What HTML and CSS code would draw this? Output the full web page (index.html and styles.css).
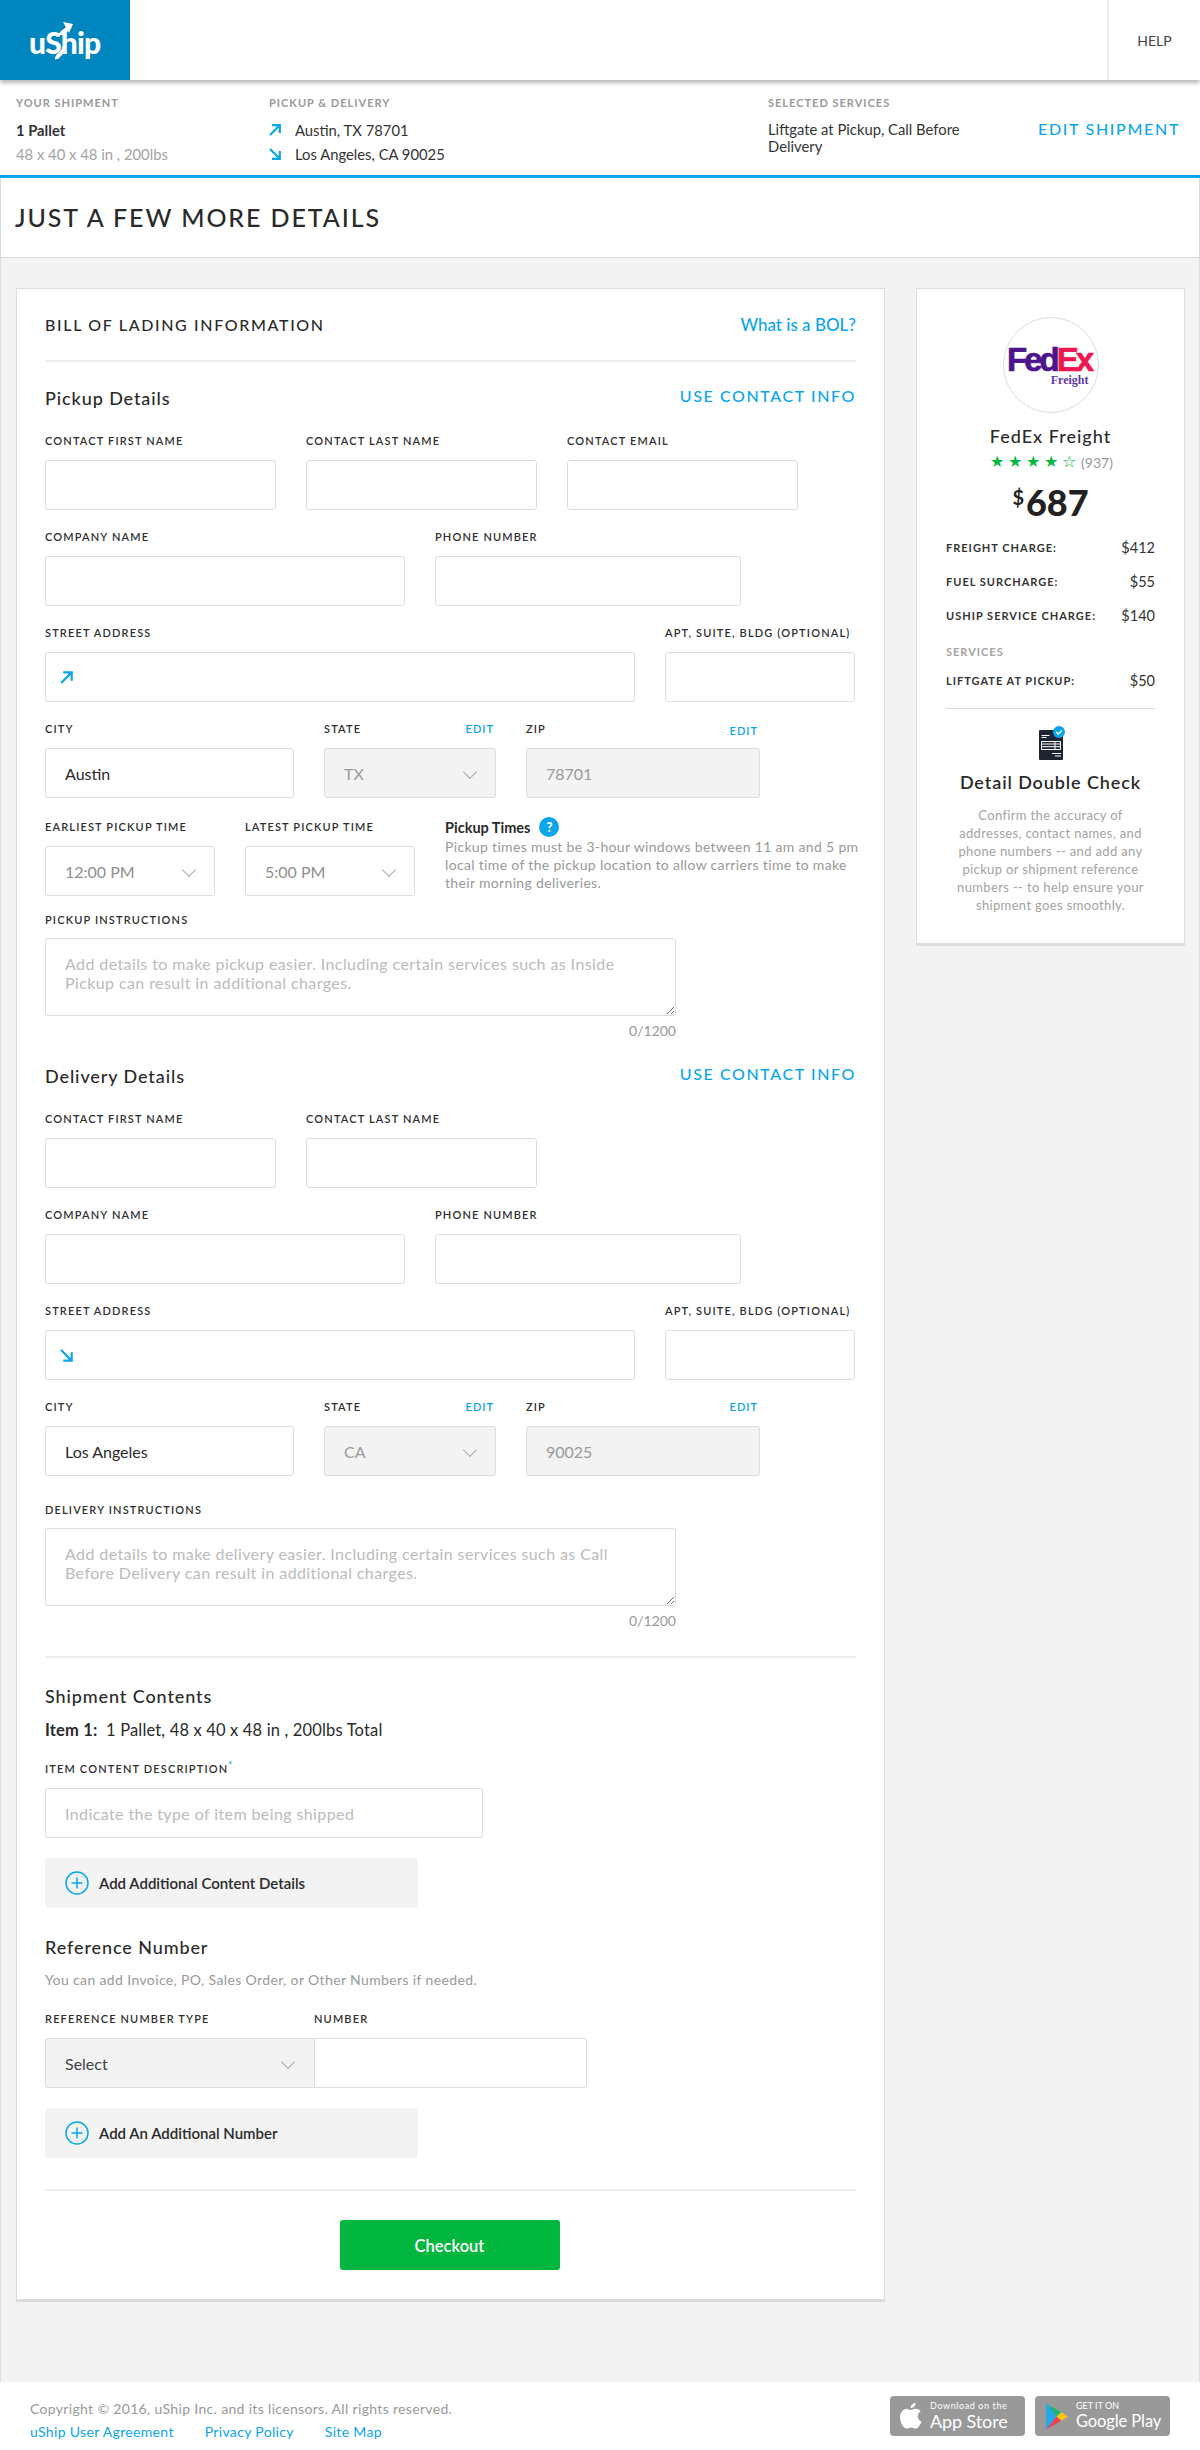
FILE: index.html
```html
<!DOCTYPE html>
<html lang="en">
<head>
<meta charset="utf-8">
<title>uShip - Just a few more details</title>
<link rel="stylesheet" href="styles.css">
</head>
<body>
<header class="topbar">
  <a class="logo" href="#">
    <span class="logo-text">uShip</span>
    <svg class="logo-swoosh" width="70" height="40" viewBox="0 0 70 40" aria-hidden="true">
      <path d="M27 37c-1-4 8-6 7-12M31 13c0-4 7-4 8-9" fill="none" stroke="#fff" stroke-width="4"/>
      <path d="M33 0l10 2-4 9z" fill="#fff"/>
    </svg>
  </a>
  <a class="help" href="#">HELP</a>
</header>

<section class="summary">
  <div class="sum-col sum-ship">
    <div class="sum-label">YOUR SHIPMENT</div>
    <div class="sum-line sum-strong">1 Pallet</div>
    <div class="sum-line sum-muted">48 x 40 x 48 in , 200lbs</div>
  </div>
  <div class="sum-col sum-route">
    <div class="sum-label">PICKUP &amp; DELIVERY</div>
    <div class="sum-line route-line">
      <svg class="arrow" width="12" height="12" viewBox="0 0 12 12"><path d="M1 11L10.500 1.500M3 1.200h7.800V9" fill="none" stroke="#0aa5ec" stroke-width="2.200"/></svg>
      Austin, TX 78701
    </div>
    <div class="sum-line route-line">
      <svg class="arrow" width="12" height="12" viewBox="0 0 12 12"><path d="M1 1l9.500 9.500M3 10.800h7.800V3" fill="none" stroke="#0aa5ec" stroke-width="2.200"/></svg>
      Los Angeles, CA 90025
    </div>
  </div>
  <div class="sum-col sum-services">
    <div class="sum-label">SELECTED SERVICES</div>
    <div class="sum-text">Liftgate at Pickup, Call Before Delivery</div>
  </div>
  <a class="edit-shipment" href="#">EDIT SHIPMENT</a>
</section>

<h1 class="page-title">JUST A FEW MORE DETAILS</h1>

<main class="content">
  <form class="card">
    <div class="card-head">
      <h2 class="bol-title">BILL OF LADING INFORMATION</h2>
      <a class="bol-link" href="#">What is a BOL?</a>
    </div>
    <div class="rule"></div>

    <div class="section-head sh-pickup">
      <h3 class="section-title">Pickup Details</h3>
      <a class="contact-link" href="#">USE CONTACT INFO</a>
    </div>
    <div class="row">
      <div class="field w231"><label class="label">CONTACT FIRST NAME</label><input class="input"></div>
      <div class="field w231"><label class="label">CONTACT LAST NAME</label><input class="input"></div>
      <div class="field w231"><label class="label">CONTACT EMAIL</label><input class="input"></div>
    </div>
    <div class="row mt20">
      <div class="field w360"><label class="label">COMPANY NAME</label><input class="input"></div>
      <div class="field w306"><label class="label">PHONE NUMBER</label><input class="input"></div>
    </div>
    <div class="row mt20">
      <div class="field w590 iconfield"><label class="label">STREET ADDRESS</label><input class="input">
        <svg class="input-arrow" width="13" height="13" viewBox="0 0 12 12"><path d="M1 11L10.500 1.500M3 1.200h7.800V9" fill="none" stroke="#0aa5ec" stroke-width="2"/></svg>
      </div>
      <div class="field w190"><label class="label">APT, SUITE, BLDG (OPTIONAL)</label><input class="input"></div>
    </div>
    <div class="row mt20">
      <div class="field w249"><label class="label">CITY</label><input class="input" value="Austin"></div>
      <div class="field w172"><div class="label label-split"><span>STATE</span><a class="edit" href="#">EDIT</a></div>
        <div class="select-wrap"><select class="input select disabled" disabled><option>TX</option></select></div></div>
      <div class="field w234"><div class="label label-split"><span>ZIP</span><a class="edit edit-low" href="#">EDIT</a></div><input class="input disabled" value="78701" disabled></div>
    </div>
    <div class="row mt22">
      <div class="field w170"><label class="label">EARLIEST PICKUP TIME</label>
        <div class="select-wrap"><select class="input select muted"><option>12:00 PM</option></select></div></div>
      <div class="field w170"><label class="label">LATEST PICKUP TIME</label>
        <div class="select-wrap"><select class="input select muted"><option>5:00 PM</option></select></div></div>
      <div class="times">
        <div class="times-head"><span class="times-title">Pickup Times</span><span class="q">?</span></div>
        <p class="times-text">Pickup times must be 3-hour windows between 11 am and 5 pm local time of the pickup location to allow carriers time to make their morning deliveries.</p>
      </div>
    </div>
    <div class="field w631 mt17"><label class="label">PICKUP INSTRUCTIONS</label>
      <textarea class="input area" placeholder="Add details to make pickup easier. Including certain services such as Inside Pickup can result in additional charges."></textarea>
      <div class="count">0/1200</div></div>

    <div class="section-head sh-delivery">
      <h3 class="section-title">Delivery Details</h3>
      <a class="contact-link" href="#">USE CONTACT INFO</a>
    </div>
    <div class="row">
      <div class="field w231"><label class="label">CONTACT FIRST NAME</label><input class="input"></div>
      <div class="field w231"><label class="label">CONTACT LAST NAME</label><input class="input"></div>
    </div>
    <div class="row mt20">
      <div class="field w360"><label class="label">COMPANY NAME</label><input class="input"></div>
      <div class="field w306"><label class="label">PHONE NUMBER</label><input class="input"></div>
    </div>
    <div class="row mt20">
      <div class="field w590 iconfield"><label class="label">STREET ADDRESS</label><input class="input">
        <svg class="input-arrow" width="13" height="13" viewBox="0 0 12 12"><path d="M1 1l9.500 9.500M3 10.800h7.800V3" fill="none" stroke="#0aa5ec" stroke-width="2"/></svg>
      </div>
      <div class="field w190"><label class="label">APT, SUITE, BLDG (OPTIONAL)</label><input class="input"></div>
    </div>
    <div class="row mt20">
      <div class="field w249"><label class="label">CITY</label><input class="input" value="Los Angeles"></div>
      <div class="field w172"><div class="label label-split"><span>STATE</span><a class="edit" href="#">EDIT</a></div>
        <div class="select-wrap"><select class="input select disabled" disabled><option>CA</option></select></div></div>
      <div class="field w234"><div class="label label-split"><span>ZIP</span><a class="edit" href="#">EDIT</a></div><input class="input disabled" value="90025" disabled></div>
    </div>
    <div class="field w631 mt27"><label class="label">DELIVERY INSTRUCTIONS</label>
      <textarea class="input area" placeholder="Add details to make delivery easier. Including certain services such as Call Before Delivery can result in additional charges."></textarea>
      <div class="count">0/1200</div></div>

    <div class="rule rule-contents"></div>
    <h3 class="section-title contents-title">Shipment Contents</h3>
    <p class="item-line"><strong>Item 1:</strong>&nbsp; 1 Pallet, 48 x 40 x 48 in , 200lbs Total</p>
    <div class="field w438 mt21"><label class="label">ITEM CONTENT DESCRIPTION<sup class="req">*</sup></label><input class="input" placeholder="Indicate the type of item being shipped"></div>
    <button class="add-btn" type="button">
      <svg width="24" height="24" viewBox="0 0 24 24"><circle cx="12" cy="12" r="11" fill="none" stroke="#0aa5ec" stroke-width="1.500"/><path d="M12 6.500v11M6.500 12h11" stroke="#0aa5ec" stroke-width="1.500"/></svg>
      Add Additional Content Details
    </button>
    <h3 class="section-title ref-title">Reference Number</h3>
    <p class="ref-help">You can add Invoice, PO, Sales Order, or Other Numbers if needed.</p>
    <div class="ref-row">
      <div class="field w269"><label class="label">REFERENCE NUMBER TYPE</label>
        <div class="select-wrap"><select class="input select ref-select"><option>Select</option></select></div></div>
      <div class="field w273"><label class="label">NUMBER</label><input class="input ref-input"></div>
    </div>
    <button class="add-btn" type="button">
      <svg width="24" height="24" viewBox="0 0 24 24"><circle cx="12" cy="12" r="11" fill="none" stroke="#0aa5ec" stroke-width="1.500"/><path d="M12 6.500v11M6.500 12h11" stroke="#0aa5ec" stroke-width="1.500"/></svg>
      Add An Additional Number
    </button>
    <div class="rule rule-end"></div>
    <div class="checkout-wrap"><button class="checkout" type="button">Checkout</button></div>
  </form>

  <aside class="side">
    <div class="carrier-logo">
      <div class="fedex"><span class="fed">Fed</span><span class="ex">Ex</span></div>
      <div class="freight">Freight</div>
    </div>
    <div class="carrier-name">FedEx Freight</div>
    <div class="rating"><span class="stars">★</span><span class="stars">★</span><span class="stars">★</span><span class="stars">★</span><span class="stars">☆</span><span class="rating-count">(937)</span></div>
    <div class="price"><span class="cur">$</span>687</div>
    <div class="charge charge-first"><span class="charge-name">FREIGHT CHARGE:</span><span class="charge-val">$412</span></div>
    <div class="charge"><span class="charge-name">FUEL SURCHARGE:</span><span class="charge-val">$55</span></div>
    <div class="charge"><span class="charge-name">USHIP SERVICE CHARGE:</span><span class="charge-val">$140</span></div>
    <div class="side-label">SERVICES</div>
    <div class="charge charge-tight"><span class="charge-name">LIFTGATE AT PICKUP:</span><span class="charge-val">$50</span></div>
    <div class="side-rule"></div>
    <svg class="doc" width="28" height="34" viewBox="0 0 28 34" aria-hidden="true">
      <rect x="2" y="4" width="24" height="30" rx="1" fill="#1d2433"/>
      <path d="M4.500 9.500h8M4.500 11.500h5M15 27.500h9M18 30h6" stroke="#fff" stroke-width="1"/>
      <path d="M4.500 15.500h19v8h-19zM4.500 18h19M4.500 20.700h19M18 15.500v8" fill="none" stroke="#fff" stroke-width="1"/>
      <circle cx="22" cy="6" r="6" fill="#0aa5ec"/>
      <path d="M19.300 6l2 2 3.500-3.500" fill="none" stroke="#fff" stroke-width="1.300"/>
    </svg>
    <div class="check-title">Detail Double Check</div>
    <p class="check-text">Confirm the accuracy of addresses, contact names, and phone numbers -- and add any pickup or shipment reference numbers -- to help ensure your shipment goes smoothly.</p>
  </aside>
</main>

<footer class="footer">
  <div class="foot-left">
    <div class="copy">Copyright © 2016, uShip Inc. and its licensors. All rights reserved.</div>
    <nav class="foot-links"><a href="#">uShip User Agreement</a><a href="#">Privacy Policy</a><a href="#">Site Map</a></nav>
  </div>
  <div class="badges">
    <a class="badge" href="#">
      <svg width="22" height="27" viewBox="0 0 22 27" aria-hidden="true"><path d="M15.500 0c.2 2.800-2.300 5.200-4.800 5 -.3-2.600 2.300-5 4.800-5zM11 7c1.300 0 2.700-1.200 4.800-1.200 2 0 3.800 1 4.800 2.600-4.200 2.400-3.500 8.200.9 10-1.200 3-3.500 7.200-5.800 7.200-1.800 0-2.500-1.100-4.500-1.100s-2.800 1.100-4.500 1.100C3.500 25.600 0 19.500 0 14.500 0 9 3.200 6 6.500 5.900 8.300 5.900 9.800 7 11 7z" fill="#fff"/></svg>
      <span class="badge-text"><span class="badge-small">Download on the</span><span class="badge-big">App Store</span></span>
    </a>
    <a class="badge" href="#">
      <svg width="23" height="27" viewBox="0 0 24 27" aria-hidden="true"><path d="M1 0v13.500L12 9z" fill="#2fc4ee"/><path d="M1 0l11 13.500L17 9z" fill="#21b66f"/><path d="M1 0v27l11-13.500z" fill="#27a6e8"/><path d="M17 9l-5 4.500 5 4.500 7-4.500z" fill="#fcc512"/><path d="M1 27l11-13.500 5 4.500z" fill="#ee4056"/></svg>
      <span class="badge-text"><span class="badge-small badge-caps">GET IT ON</span><span class="badge-big badge-play">Google Play</span></span>
    </a>
  </div>
</footer>
</body>
</html>
```
FILE: styles.css
```css
* { box-sizing: border-box; }
html, body { margin: 0; padding: 0; }
body { font-family: Lato, "Liberation Sans", sans-serif; color: #2a2a2a; background: #fff; font-size: 14px; width: 1200px; }
a { text-decoration: none; color: #0aa5ec; }
h1, h2, h3, p { margin: 0; font-weight: inherit; }

.topbar { height: 80px; display: flex; justify-content: space-between; background: #fff; box-shadow: 0 3px 4px rgba(0,0,0,.28); position: relative; }
.logo { width: 130px; background: #0086bf; position: relative; display: block; }
.logo-text { position: absolute; left: 29px; top: 25px; font-size: 30px; line-height: 34px; font-weight: 900; color: #fff; letter-spacing: -.8px; }
.logo-swoosh { position: absolute; left: 30px; top: 22px; }
.help { width: 93px; border-left: 2px solid #eee; display: flex; align-items: center; justify-content: center; font-size: 14px; color: #444; }

.summary { height: 98px; padding: 16px 0 0 16px; display: flex; border-bottom: 3px solid #0aa5ec; }
.sum-col { flex: none; }
.sum-ship { width: 253px; }
.sum-route { width: 499px; }
.sum-services { width: 270px; }
.sum-label { font-size: 11px; line-height: 14px; font-weight: 700; letter-spacing: 1px; color: #999; margin-bottom: 8px; }
.sum-line { font-size: 14.800px; line-height: 24px; color: #333; display: flex; align-items: center; }
.sum-strong { font-weight: 700; }
.sum-muted { color: #a3a3a3; }
.route-line { gap: 14px; }
.sum-text { font-size: 14.800px; line-height: 17px; width: 214px; color: #333; padding-top: 3px; }
.edit-shipment { font-size: 16px; font-weight: 500; letter-spacing: 1.700px; line-height: 20px; margin-top: 23px; white-space: nowrap; }

.page-title { height: 80px; border: 1px solid #ddd; border-top: 0; padding-left: 14px; font-size: 25px; line-height: 78px; font-weight: 500; letter-spacing: 1.900px; color: #2a2a2a; background: #fff; }

.content { background: #f3f3f3; border-left: 1px solid #ddd; border-right: 1px solid #ddd; padding: 30px 14px 80px 15px; display: flex; gap: 31px; align-items: flex-start; height: 2124px; }
.card { width: 869px; flex: none; background: #fff; border: 1px solid #ddd; border-bottom: 3px solid #ddd; padding: 0 28px 29px; height: 2014px; }
.side { width: 269px; flex: none; background: #fff; border: 1px solid #ddd; border-bottom: 3px solid #ddd; padding: 0 29px; height: 658px; display: flex; flex-direction: column; }

.card-head { height: 71px; display: flex; justify-content: space-between; align-items: center; }
.bol-title { font-size: 16px; font-weight: 500; letter-spacing: 1.650px; color: #2a2a2a; }
.bol-link { font-size: 17px; font-weight: 500; }
.rule { height: 2px; background: #eee; }

.section-head { height: 36px; display: flex; justify-content: space-between; align-items: center; }
.sh-pickup { margin-top: 18px; margin-bottom: 18px; }
.sh-delivery { margin-top: 19px; margin-bottom: 18px; }
.section-title { font-size: 18px; line-height: 24px; font-weight: 500; letter-spacing: .9px; color: #2a2a2a; }
.contact-link { font-size: 16px; font-weight: 500; letter-spacing: 1.600px; margin-top: -5px; }

.row { display: flex; gap: 30px; }
.mt20 { margin-top: 20px; }
.mt22 { margin-top: 22px; }
.mt17 { margin-top: 17px; }
.mt27 { margin-top: 27px; }
.mt21 { margin-top: 21px; }
.field { position: relative; flex: none; }
.w170 { width: 170px; }
.w172 { width: 172px; }
.w190 { width: 190px; }
.w231 { width: 231px; }
.w234 { width: 234px; }
.w249 { width: 249px; }
.w269 { width: 269px; }
.w273 { width: 273px; }
.w306 { width: 306px; }
.w360 { width: 360px; }
.w438 { width: 438px; }
.w590 { width: 590px; }
.w631 { width: 631px; }

.label { display: block; font-size: 11px; line-height: 14px; height: 14px; margin-bottom: 12px; font-weight: 600; letter-spacing: 1.150px; color: #2f2f2f; white-space: nowrap; }
.w631 .label { margin-bottom: 11px; }
.label-split { display: flex; justify-content: space-between; padding-right: 2px; }
.edit { font-weight: 600; font-size: 11px; letter-spacing: 1px; color: #0aa5ec; }
.edit-low { position: relative; top: 2px; }
.req { color: #0aa5ec; font-size: 9px; line-height: 0; }

.input { display: block; width: 100%; height: 50px; border: 1px solid #ddd; border-radius: 3px; background: #fff; padding: 0 19px; font: 400 16px Lato, "Liberation Sans", sans-serif; color: #2a2a2a; outline: none; margin: 0; }
.input::placeholder { color: #bbb; opacity: 1; letter-spacing: .4px; }
.disabled { background: #f3f3f3; color: #9a9a9a; -webkit-text-fill-color: #9a9a9a; opacity: 1; }
.select { appearance: none; -webkit-appearance: none; }
.muted { color: #8f8f8f; }
.select-wrap { position: relative; }
.select-wrap::after { content: ""; position: absolute; right: 21px; top: 19px; width: 9px; height: 9px; border-right: 1.500px solid #aaa; border-bottom: 1.500px solid #aaa; transform: rotate(45deg); pointer-events: none; }
.input-arrow { position: absolute; left: 15px; top: 45px; }
.area { height: 78px; padding: 15px 19px; line-height: 19px; font-size: 16px; resize: vertical; }
.count { font-size: 14px; line-height: 16px; color: #999; text-align: right; margin-top: 7px; }

.times { width: 415px; flex: none; }
.times-head { height: 20px; display: flex; align-items: center; gap: 9px; margin-bottom: 1px; margin-top: -3px; }
.times-title { font-size: 14.500px; font-weight: 700; color: #2a2a2a; }
.q { width: 20px; height: 20px; border-radius: 50%; background: #0aa5ec; color: #fff; font-size: 13px; font-weight: 900; line-height: 20px; text-align: center; }
.times-text { font-size: 14px; line-height: 18px; color: #999; letter-spacing: .33px; }

.rule-contents { margin-top: 27px; }
.contents-title { margin-top: 26px; }
.item-line { font-size: 16.500px; line-height: 22px; margin-top: 11px; color: #2a2a2a; letter-spacing: .16px; }
.item-line strong { font-weight: 700; }
.add-btn { display: flex; align-items: center; gap: 10px; width: 373px; height: 50px; margin-top: 20px; padding: 0 0 0 20px; border: 0; border-radius: 4px; background: #f3f3f3; font: 600 15px Lato, "Liberation Sans", sans-serif; color: #2a2a2a; }
.ref-title { margin-top: 27px; }
.ref-help { font-size: 14px; line-height: 18px; color: #999; margin-top: 12px; letter-spacing: .37px; }
.ref-row { display: flex; margin-top: 23px; }
.ref-select { background: #f3f3f3; border-radius: 3px 0 0 3px; color: #444; border-right: 0; }
.ref-input { border-radius: 0 3px 3px 0; }
.rule-end { margin-top: 31px; }
.checkout-wrap { margin-top: 29px; display: flex; justify-content: center; padding-right: 2px; }
.checkout { width: 220px; height: 50px; background: #00b63e; color: #fff; border: 0; border-radius: 3px; padding-top: 2px; font: 600 16.500px Lato, "Liberation Sans", sans-serif; }

.carrier-logo { width: 96px; height: 96px; border: 1px solid #ddd; border-radius: 50%; margin: 28px auto 0; position: relative; padding-top: 28px; text-align: center; }
.fedex { font: 700 33px/27px "Liberation Sans", sans-serif; letter-spacing: -3px; white-space: nowrap; -webkit-text-stroke: .7px; margin-left: -3px; }
.fed { color: #4d148c; }
.ex { color: #f0184f; }
.freight { font: 700 12px/14px "Liberation Serif", serif; color: #5f3aa5; text-align: right; padding-right: 9px; }
.carrier-name { text-align: center; font-size: 18px; line-height: 24px; font-weight: 500; letter-spacing: 1px; margin-top: 11px; color: #2a2a2a; }
.rating { display: flex; justify-content: center; align-items: center; height: 18px; margin-top: 5px; }
.stars { width: 18px; text-align: center; color: #00b63e; font: 16px/18px "DejaVu Sans", sans-serif; }
.rating-count { color: #999; font-size: 14px; margin-left: 3px; }
.price { text-align: center; font-size: 36px; line-height: 44px; font-weight: 900; margin-top: 9px; color: #222; }
.cur { font-size: 20px; vertical-align: 11px; line-height: 0; font-weight: 700; margin-right: 2px; }
.charge { display: flex; justify-content: space-between; align-items: center; height: 16px; margin-top: 18px; }
.charge-first { margin-top: 15px; }
.charge-tight { margin-top: 13px; }
.charge-name { font-size: 11px; font-weight: 700; letter-spacing: 1px; color: #333; }
.charge-val { font-size: 14.500px; color: #333; }
.side-label { font-size: 11px; font-weight: 700; letter-spacing: 1px; color: #a3a3a3; line-height: 14px; margin-top: 22px; }
.side-rule { height: 1px; background: #ddd; margin-top: 20px; }
.doc { align-self: center; margin-top: 17px; }
.check-title { text-align: center; font-size: 18px; line-height: 24px; font-weight: 600; letter-spacing: .9px; margin-top: 10px; color: #2a2a2a; }
.check-text { text-align: center; font-size: 13px; line-height: 18px; color: #a3a3a3; margin-top: 12px; letter-spacing: .35px; }

.footer { height: 68px; background: #fff; display: flex; justify-content: space-between; padding: 15px 30px 0; }
.copy { font-size: 14px; line-height: 24px; color: #999; letter-spacing: .33px; }
.foot-links { display: flex; gap: 31px; font-size: 14px; line-height: 22px; letter-spacing: .33px; }
.badges { display: flex; gap: 10px; margin-top: -1px; }
.badge { width: 135px; height: 40px; background: #999; border-radius: 4px; display: flex; align-items: center; gap: 8px; padding-left: 10px; color: #fff; }
.badge-text { display: flex; flex-direction: column; }
.badge-small { font-size: 9px; line-height: 10px; letter-spacing: .6px; }
.badge-caps { letter-spacing: 0; }
.badge-big { font-size: 18px; line-height: 20px; letter-spacing: -.1px; white-space: nowrap; }
.badge-play { font-size: 16.500px; }
```
